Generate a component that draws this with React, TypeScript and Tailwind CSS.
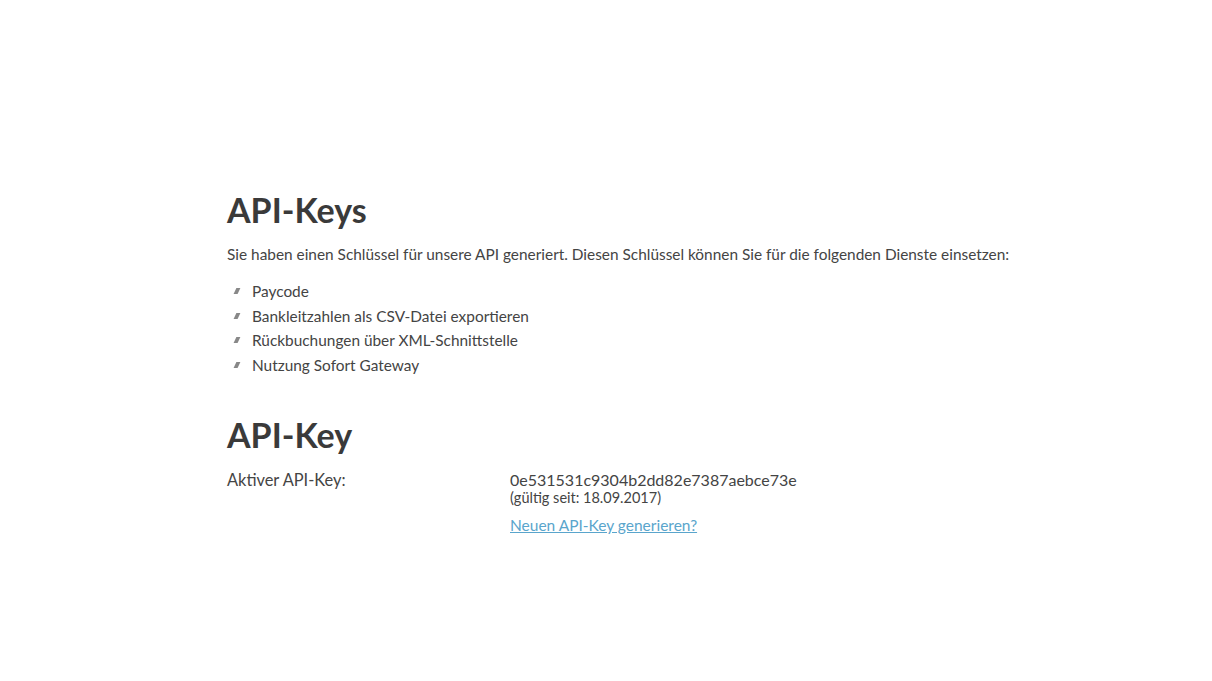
export default function App() {
  const services = [
    "Paycode",
    "Bankleitzahlen als CSV-Datei exportieren",
    "Rückbuchungen über XML-Schnittstelle",
    "Nutzung Sofort Gateway",
  ];

  return (
    <div className="min-h-[681px] w-full bg-white font-['Lato','Noto_Sans',sans-serif] text-[#444]">
      <div className="pl-[227px] pt-[188px]">
        <h1 className="text-[34px] font-bold leading-[44px] text-[#3a3a3a]">API-Keys</h1>
        <p className="mt-[12px] text-[15.4px] leading-[20px]">
          Sie haben einen Schlüssel für unsere API generiert. Diesen Schlüssel können Sie für die folgenden Dienste einsetzen:
        </p>
        <ul className="mt-[15px]">
          {services.map((s) => (
            <li key={s} className="flex items-center text-[15.4px] leading-[24.5px]">
              <span className="mr-[13px] ml-[8px] inline-block h-[6px] w-[4px] -skew-x-[25deg] bg-[#888]" />
              {s}
            </li>
          ))}
        </ul>

        <h2 className="mt-[36px] text-[34px] font-bold leading-[44px] text-[#3a3a3a]">API-Key</h2>
        <div className="mt-[13px] flex">
          <div className="w-[283px] text-[16.4px] leading-[20px]">Aktiver API-Key:</div>
          <div>
            <div className="text-[16px] leading-[20px]">0e531531c9304b2dd82e7387aebce73e</div>
            <div className="text-[14.5px] leading-[16px]">(gültig seit: 18.09.2017)</div>
            <a href="#" className="mt-[9px] inline-block text-[15.5px] leading-[20px] text-[#5aa5cc] underline">
              Neuen API-Key generieren?
            </a>
          </div>
        </div>
      </div>
    </div>
  );
}
